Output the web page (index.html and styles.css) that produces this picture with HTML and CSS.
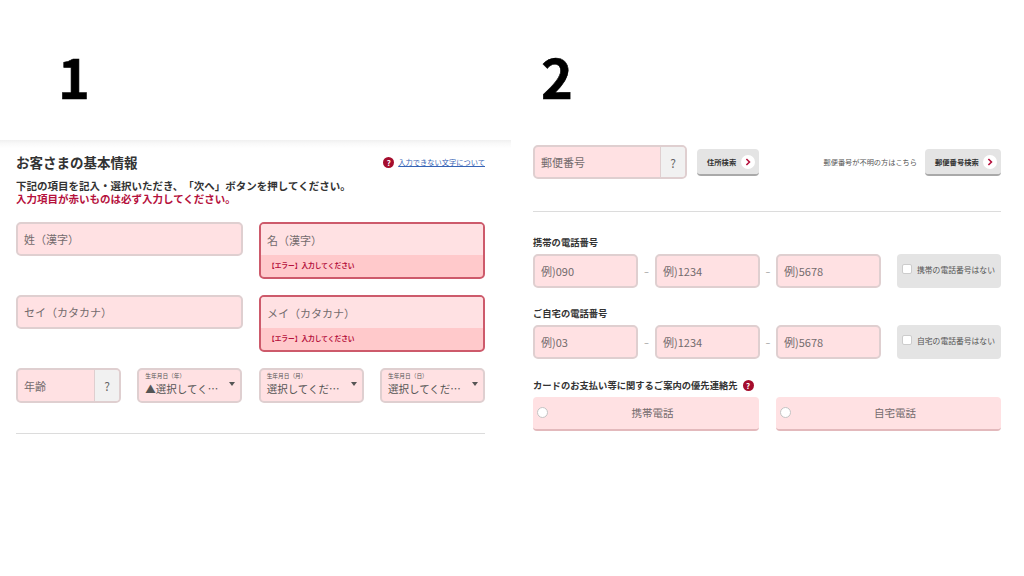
FILE: index.html
```html
<!DOCTYPE html>
<html lang="ja">
<head>
<meta charset="utf-8">
<title>お客さまの基本情報</title>
<link rel="stylesheet" href="styles.css">
</head>
<body>
<main class="page">
  <section class="panel panel-one">
    <div class="step">1</div>
    <div class="sheet">
      <div class="title-row">
        <h1 class="title">お客さまの基本情報</h1>
        <a class="help-link" href="#"><span class="q-badge">?</span><span class="link-text">入力できない文字について</span></a>
      </div>
      <p class="lead">下記の項目を記入・選択いただき、「次へ」ボタンを押してください。</p>
      <p class="lead lead-red">入力項目が赤いものは必ず入力してください。</p>
      <div class="name-grid">
        <div class="field"><span class="input-text">姓（漢字）</span></div>
        <div class="field-error"><div class="field-inner"><span class="input-text">名（漢字）</span></div><div class="error-msg">【エラー】入力してください</div></div>
        <div class="field"><span class="input-text">セイ（カタカナ）</span></div>
        <div class="field-error"><div class="field-inner"><span class="input-text">メイ（カタカナ）</span></div><div class="error-msg">【エラー】入力してください</div></div>
      </div>
      <div class="birth-row">
        <div class="field field-q"><span class="input-text grow">年齢</span><span class="q-box">?</span></div>
        <div class="select"><span class="select-label">生年月日（年）</span><span class="select-value">▲選択してく…</span><span class="caret"></span></div>
        <div class="select"><span class="select-label">生年月日（月）</span><span class="select-value">選択してくだ…</span><span class="caret"></span></div>
        <div class="select"><span class="select-label">生年月日（日）</span><span class="select-value">選択してくだ…</span><span class="caret"></span></div>
      </div>
      <hr class="rule rule-one">
    </div>
  </section>
  <section class="panel panel-two">
    <div class="step">2</div>
    <div class="sheet-two">
      <div class="zip-row">
        <div class="field field-q zip"><span class="input-text grow">郵便番号</span><span class="q-box">?</span></div>
        <button class="btn btn-addr" type="button">住所検索<span class="chev"><svg viewBox="0 0 10 10" width="8" height="8"><path d="M3 1.2 6.8 5 3 8.8" fill="none" stroke="#b5103c" stroke-width="2"/></svg></span></button>
        <span class="zip-note">郵便番号が不明の方はこちら</span>
        <button class="btn btn-zip" type="button">郵便番号検索<span class="chev"><svg viewBox="0 0 10 10" width="8" height="8"><path d="M3 1.2 6.8 5 3 8.8" fill="none" stroke="#b5103c" stroke-width="2"/></svg></span></button>
      </div>
      <hr class="rule rule-two">
      <div class="group-label label-mobile">携帯の電話番号</div>
      <div class="tel-row">
        <div class="field"><span class="input-text">例)090</span></div><span class="dash">−</span>
        <div class="field"><span class="input-text">例)1234</span></div><span class="dash">−</span>
        <div class="field"><span class="input-text">例)5678</span></div>
        <label class="no-tel"><span class="box"></span>携帯の電話番号はない</label>
      </div>
      <div class="group-label label-home">ご自宅の電話番号</div>
      <div class="tel-row">
        <div class="field"><span class="input-text">例)03</span></div><span class="dash">−</span>
        <div class="field"><span class="input-text">例)1234</span></div><span class="dash">−</span>
        <div class="field"><span class="input-text">例)5678</span></div>
        <label class="no-tel"><span class="box"></span>自宅の電話番号はない</label>
      </div>
      <div class="group-label label-pref">カードのお支払い等に関するご案内の優先連絡先<span class="q-badge q-inline">?</span></div>
      <div class="radio-row">
        <div class="radio"><span class="dot"></span>携帯電話</div>
        <div class="radio"><span class="dot"></span>自宅電話</div>
      </div>
    </div>
  </section>
</main>
</body>
</html>
```
FILE: styles.css
```css
* { box-sizing: border-box; }
html, body { margin: 0; padding: 0; background: #fff; }
body {
  width: 1024px;
  height: 576px;
  overflow: hidden;
  color: #333;
  font-family: "Noto Sans CJK JP", "Noto Sans", sans-serif;
  text-spacing-trim: space-all;
}
.page { display: grid; grid-template-columns: 511px 513px; }
.panel { height: 576px; }
.step {
  height: 140px;
  padding-top: 36px;
  font-size: 54px;
  line-height: 80px;
  font-weight: 700;
  color: #000;
  -webkit-text-stroke: 0.6px #000;
}
.panel-one .step { padding-left: 58px; }
.panel-two .step { padding-left: 30px; }
.sheet {
  height: 310px;
  padding: 13px 26px 0 16px;
  background: linear-gradient(#f0f0f0 0, #f8f8f8 3px, #fff 8px);
}
.sheet-two { padding: 5px 23px 0 22px; }
.title-row { display: flex; justify-content: space-between; align-items: center; height: 19px; }
.title { margin: 0; font-size: 13.5px; line-height: 19px; font-weight: 700; color: #333; }
.help-link { display: flex; align-items: center; gap: 4px; text-decoration: none; }
.link-text { font-size: 7.25px; color: #3563b5; text-decoration: underline; line-height: 11px; }
.q-badge {
  display: inline-flex;
  align-items: center;
  justify-content: center;
  width: 11px;
  height: 11px;
  border-radius: 50%;
  background: #a50d2d;
  color: #fff;
  font-size: 8px;
  font-weight: 700;
  line-height: 11px;
}
.lead { margin: 0; font-size: 10.5px; line-height: 13px; font-weight: 700; color: #333; }
.title-row + .lead { margin-top: 7px; }
.lead-red { color: #b5103c; }
.name-grid {
  display: grid;
  grid-template-columns: 227px 226px;
  grid-template-rows: 57px 57px;
  column-gap: 16px;
  row-gap: 16px;
  margin-top: 17px;
  align-items: start;
}
.field {
  display: flex;
  align-items: center;
  height: 34px;
  background: #ffe1e3;
  border: 2px solid #dfcfd0;
  border-radius: 5px;
  overflow: hidden;
}
.input-text { padding-left: 6px; font-size: 11px; color: #736b6d; white-space: nowrap; }
.grow { flex: 1; align-self: stretch; display: flex; align-items: center; }
.field-error {
  height: 57px;
  background: #ffc9cb;
  border: 2px solid #cd5a6b;
  border-radius: 5px;
  overflow: hidden;
}
.field-inner { display: flex; align-items: center; height: 31px; background: #ffe1e3; }
.field-inner .input-text { padding-left: 6px; }
.error-msg { padding: 4px 0 0 7px; font-size: 6.7px; line-height: 13px; font-weight: 700; color: #b5103c; }
.birth-row {
  display: grid;
  grid-template-columns: 105px 105px 105px 105px;
  margin-top: 16px;
  width: 469px;
  justify-content: space-between;
}
.birth-row > * { height: 35px; }
.q-box {
  display: flex;
  align-items: center;
  justify-content: center;
  align-self: stretch;
  width: 25px;
  background: #f1f1f1;
  border-left: 1px solid #dfcfd0;
  font-size: 12px;
  color: #666;
}
.select {
  position: relative;
  background: #ffe1e3;
  border: 2px solid #dfcfd0;
  border-radius: 5px;
  padding: 2px 0 0 6px;
}
.select-label { display: block; font-size: 5.7px; line-height: 8px; color: #555; }
.select-value { display: block; font-size: 10.5px; line-height: 18px; color: #555; white-space: nowrap; }
.caret {
  position: absolute;
  top: 12px;
  right: 5px;
  border-left: 3px solid transparent;
  border-right: 3px solid transparent;
  border-top: 4px solid #555;
}
.rule { border: 0; border-top: 1px solid #dcdcdc; margin: 0; }
.rule-one { margin-top: 30px; width: 469px; }
.zip-row { display: flex; align-items: center; height: 34px; }
.zip { width: 154px; }
.btn {
  display: flex;
  align-items: center;
  justify-content: space-between;
  height: 27px;
  margin-top: 1px;
  padding: 0 4px 0 10px;
  background: #e4e4e4;
  border: 0;
  border-bottom: 2px solid #a9a9a9;
  border-radius: 4px;
  font-family: inherit;
  font-size: 7.3px;
  font-weight: 700;
  color: #333;
  white-space: nowrap;
}
.btn-addr { width: 62px; margin-left: 10px; }
.btn-zip { width: 76px; margin-left: 8px; }
.chev {
  flex: none;
  display: flex;
  align-items: center;
  justify-content: center;
  width: 14px;
  height: 14px;
  border-radius: 50%;
  background: #fff;
}
.zip-note { margin: 0 0 0 auto; font-size: 7.2px; color: #555; white-space: nowrap; }
.rule-two { margin-top: 32px; }
.group-label { font-size: 9.3px; line-height: 12px; font-weight: 700; color: #333; white-space: nowrap; }
.label-mobile { margin-top: 24px; }
.label-home { margin-top: 19px; }
.label-pref { display: flex; align-items: center; gap: 5px; margin-top: 20px; }
.tel-row {
  display: grid;
  grid-template-columns: 105px 17px 105px 16px 105px 120px;
  margin-top: 6px;
  align-items: center;
}
.tel-row .field { height: 34px; }
.dash { text-align: center; font-size: 8px; color: #888; }
.no-tel {
  display: flex;
  align-items: center;
  gap: 5px;
  height: 34px;
  margin-left: 16px;
  padding: 0 0 4px 5px;
  background: #e4e4e4;
  border-radius: 4px;
  font-size: 7.8px;
  color: #555;
  white-space: nowrap;
}
.box {
  flex: none;
  width: 10px;
  height: 10px;
  background: #fff;
  border: 1px solid #ccc;
  border-radius: 2px;
}
.radio-row { display: grid; grid-template-columns: 226px 225px; column-gap: 17px; margin-top: 6px; }
.radio {
  position: relative;
  display: flex;
  align-items: center;
  justify-content: center;
  height: 34px;
  padding: 0 0 2px 13px;
  background: #ffe1e3;
  border-bottom: 2px solid #e3b9bc;
  border-radius: 4px;
  font-size: 10.5px;
  color: #736b6d;
}
.dot {
  position: absolute;
  left: 4px;
  top: 10px;
  width: 11px;
  height: 11px;
  background: #fff;
  border: 1px solid #c4c4c4;
  border-radius: 50%;
}
```
